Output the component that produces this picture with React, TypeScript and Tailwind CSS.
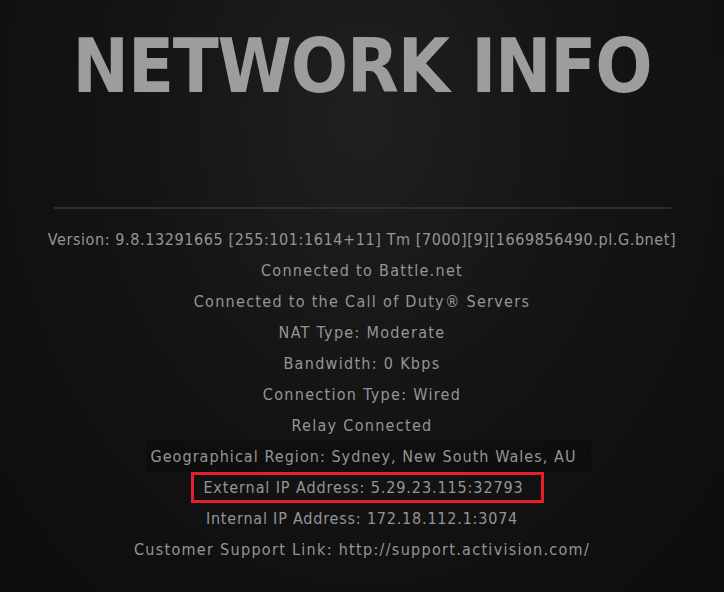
const lines = [
  "Version: 9.8.13291665 [255:101:1614+11] Tm [7000][9][1669856490.pl.G.bnet]",
  "Connected to Battle.net",
  "Connected to the Call of Duty® Servers",
  "NAT Type: Moderate",
  "Bandwidth: 0 Kbps",
  "Connection Type: Wired",
  "Relay Connected",
  "Geographical Region: Sydney, New South Wales, AU",
  "External IP Address: 5.29.23.115:32793",
  "Internal IP Address: 172.18.112.1:3074",
  "Customer Support Link: http://support.activision.com/",
];

export default function App() {
  return (
    <div className="h-[592px] w-[724px] overflow-hidden bg-[radial-gradient(ellipse_at_50%_20%,#202020_0%,#141414_45%,#0d0d0d_100%)] font-['DejaVu_Sans_Condensed','Liberation_Sans_Narrow',Roboto,sans-serif]">
      <div className="flex flex-col items-center">
        <h1 className="mt-[29px] text-[75px] font-bold leading-none tracking-[-1.2px] text-[#9d9d9d]">
          NETWORK INFO
        </h1>
        <div className="mt-[103px] h-[2px] w-[617px] bg-[#2e2e2e]" />
        <div className="mt-[15px] flex flex-col items-center text-[16px] text-[#959595]">
          {lines.map((line) => {
            const isVersion = line.startsWith("Version");
            const isExternal = line.startsWith("External");
            const isInternal = line.startsWith("Internal");
            const isGeo = line.startsWith("Geographical");
            return (
              <div
                key={line}
                className={`flex h-[31px] items-center ${
                  isVersion
                    ? "px-[9px] tracking-[0.6px]"
                    : isExternal
                      ? "ml-[11px] border-[3px] border-[#e3202b] pl-[9px] pr-[17px] tracking-[0.9px]"
                      : isInternal
                        ? "px-[9px] tracking-[0.8px]"
                        : isGeo
                          ? "ml-[13px] bg-black/20 pl-[4px] pr-[14px] tracking-[1.05px]"
                          : "px-[9px] tracking-[1.3px]"
                }`}
              >
                {line}
              </div>
            );
          })}
        </div>
      </div>
    </div>
  );
}
